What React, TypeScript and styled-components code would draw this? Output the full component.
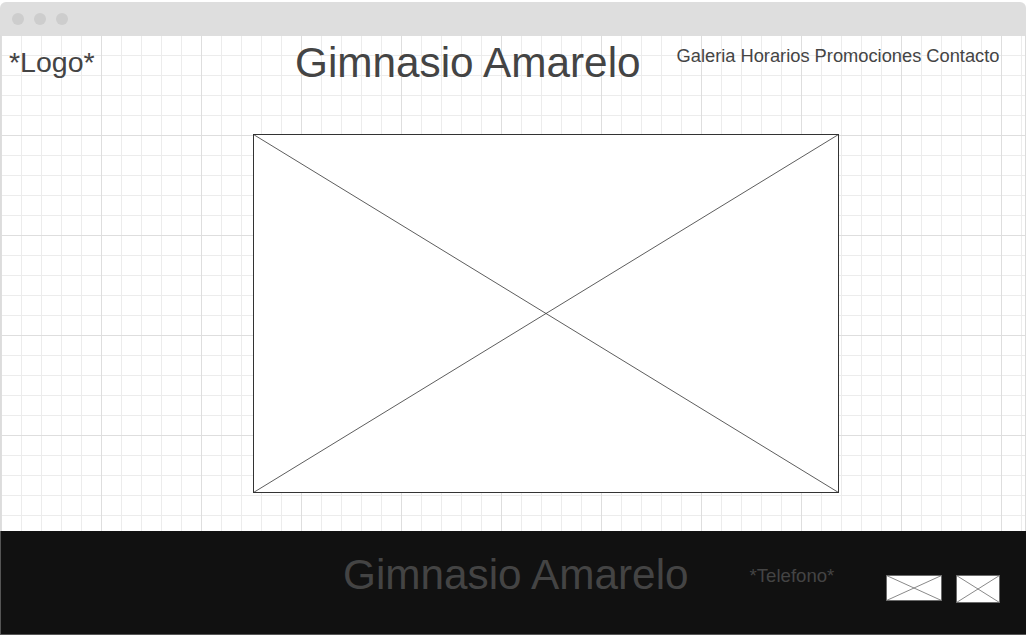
import React, {FC} from 'react';
import styled, {createGlobalStyle} from "styled-components";

const GlobalStyle = createGlobalStyle`
  html, body {
    margin: 0;
    padding: 0;
    background: #ffffff;
    font-family: "Liberation Sans", Arial, sans-serif;
  }
`

type BoxProps = {
    w: number
    h: number
    stroke?: string
}

// rectangle with an X, the usual wireframe stand-in for a picture
const ImageBox: FC<BoxProps & {className?: string}> = ({w, h, stroke = '#333', className}) => {
    return (
        <svg className={className} width={w} height={h} viewBox={`0 0 ${w} ${h}`}>
            <rect x={0.5} y={0.5} width={w - 1} height={h - 1} fill="#fff" stroke={stroke} strokeWidth={1}/>
            <line x1={0.5} y1={0.5} x2={w - 0.5} y2={h - 0.5} stroke={stroke} strokeWidth={0.8}/>
            <line x1={w - 0.5} y1={0.5} x2={0.5} y2={h - 0.5} stroke={stroke} strokeWidth={0.8}/>
        </svg>
    )
}

const App: FC = () => {
    const links = ['Galeria', 'Horarios', 'Promociones', 'Contacto']
    return (
        <>
            <GlobalStyle/>
            <Window>
                <TitleBar>
                    <Dot/>
                    <Dot/>
                    <Dot/>
                </TitleBar>
                <Canvas>
                    <Header>
                        <Logo>*Logo*</Logo>
                        <Title>Gimnasio Amarelo</Title>
                        <Nav>
                            {links.map((l) => <NavLink key={l}>{l}</NavLink>)}
                        </Nav>
                    </Header>
                    <Hero w={586} h={359}/>
                </Canvas>
                <Footer>
                    <FooterTitle>Gimnasio Amarelo</FooterTitle>
                    <Phone>*Telefono*</Phone>
                    <Social>
                        <ImageBox w={56} h={26} stroke="#6b6b6b"/>
                        <ImageBox w={44} h={28} stroke="#6b6b6b"/>
                    </Social>
                </Footer>
            </Window>
        </>
    );
};

export default App;

const Window = styled.div`
  width: 1026px;
  height: 633px;
  margin-top: 2px;
  display: flex;
  flex-direction: column;
  box-sizing: border-box;
`

const TitleBar = styled.div`
  height: 33px;
  background: #dedede;
  border-radius: 6px 6px 0 0;
  display: flex;
  align-items: center;
  gap: 10px;
  padding-left: 12px;
  padding-top: 1px;
  box-sizing: border-box;
`

const Dot = styled.span`
  width: 12px;
  height: 12px;
  border-radius: 50%;
  background: #cdcdcd;
`

const Canvas = styled.div`
  height: 496px;
  border-left: 1px solid #dcdcdc;
  border-right: 1px solid #dcdcdc;
  background-color: #fff;
  background-image:
    linear-gradient(to right, #dedede 1px, transparent 1px),
    linear-gradient(to bottom, #dedede 1px, transparent 1px),
    linear-gradient(to right, #ececec 1px, transparent 1px),
    linear-gradient(to bottom, #ececec 1px, transparent 1px);
  background-size: 100px 100px, 100px 100px, 20px 20px, 20px 20px;
  display: flex;
  flex-direction: column;
`

const Header = styled.div`
  height: 60px;
  display: flex;
  align-items: flex-start;
  padding-left: 8px;
  color: #444444;
`

const Logo = styled.div`
  flex: 0 0 286px;
  font-size: 28.5px;
  line-height: 1;
  margin-top: 13px;
`

const Title = styled.h1`
  margin: 7px 0 0;
  font-size: 42.3px;
  font-weight: normal;
  line-height: 1;
  white-space: nowrap;
`

const Nav = styled.nav`
  margin: 12px 0 0 36px;
  display: flex;
  gap: 5px;
  font-size: 18.3px;
  line-height: 1;
`

const NavLink = styled.span`
  white-space: nowrap;
`

const Hero = styled(ImageBox)`
  display: block;
  margin: 39px 0 0 252px;
`

const Footer = styled.footer`
  height: 104px;
  background: #111111;
  border-left: 1px solid #555;
  border-bottom: 1px solid #555;
  display: flex;
  align-items: flex-start;
  padding-left: 342px;
  box-sizing: border-box;
  color: #444444;
`

const FooterTitle = styled.div`
  margin-top: 23px;
  font-size: 42.3px;
  line-height: 1;
  white-space: nowrap;
`

const Phone = styled.div`
  margin: 36px 0 0 61px;
  font-size: 18.6px;
  line-height: 1;
`

const Social = styled.div`
  margin: 44px 0 0 52px;
  display: flex;
  align-items: flex-start;
  gap: 14px;
`
